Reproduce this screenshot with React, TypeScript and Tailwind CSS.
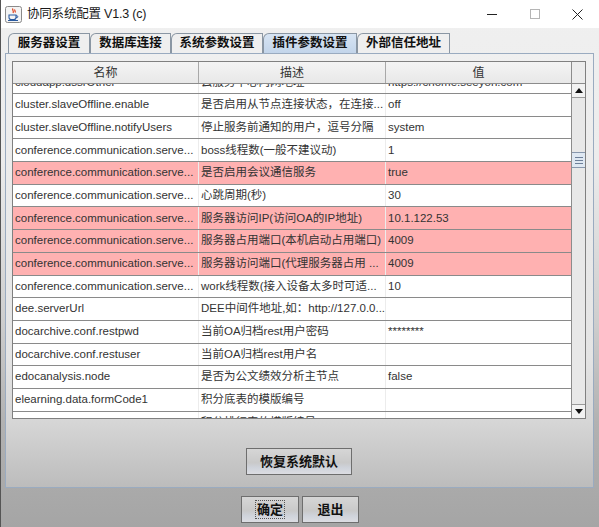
import React from "react";

type Row = { k: string; d: string; v: string; p?: boolean };

const rows: Row[] = [
  { k: "cloudapp.dssrOther", d: "云服务中心内网地址", v: "https://chome.seeyon.com" },
  { k: "cluster.slaveOffline.enable", d: "是否启用从节点连接状态，在连接...", v: "off" },
  { k: "cluster.slaveOffline.notifyUsers", d: "停止服务前通知的用户，逗号分隔", v: "system" },
  { k: "conference.communication.serve...", d: "boss线程数(一般不建议动)", v: "1" },
  { k: "conference.communication.serve...", d: "是否启用会议通信服务", v: "true", p: true },
  { k: "conference.communication.serve...", d: "心跳周期(秒)", v: "30" },
  { k: "conference.communication.serve...", d: "服务器访问IP(访问OA的IP地址)", v: "10.1.122.53", p: true },
  { k: "conference.communication.serve...", d: "服务器占用端口(本机启动占用端口)", v: "4009", p: true },
  { k: "conference.communication.serve...", d: "服务器访问端口(代理服务器占用 ...", v: "4009", p: true },
  { k: "conference.communication.serve...", d: "work线程数(接入设备太多时可适...", v: "10" },
  { k: "dee.serverUrl", d: "DEE中间件地址,如：http://127.0.0....", v: "" },
  { k: "docarchive.conf.restpwd", d: "当前OA归档rest用户密码", v: "********" },
  { k: "docarchive.conf.restuser", d: "当前OA归档rest用户名", v: "" },
  { k: "edocanalysis.node", d: "是否为公文绩效分析主节点", v: "false" },
  { k: "elearning.data.formCode1", d: "积分底表的模版编号", v: "" },
  { k: "elearning.data.formCode2", d: "积分排行表的模版编号", v: "" },
];

const tabs = [
  { t: "服务器设置", w: "w-[82px]" },
  { t: "数据库连接", w: "w-[81px]" },
  { t: "系统参数设置", w: "w-[92px]" },
  { t: "插件参数设置", w: "w-[94px]", sel: true },
  { t: "外部信任地址", w: "w-[93px]" },
];

function JavaIcon() {
  return (
    <svg width="17" height="17" viewBox="0 0 17 17">
      <rect x="0.5" y="0.5" width="16" height="16" rx="2" fill="#f4f4f4" stroke="#8a8a8a" />
      <path d="M8 2.5c-1.5 1.5 1.5 2.5 0 4.5M10 3.5c-1 1 1 1.8 0 3" stroke="#e0401a" strokeWidth="1.2" fill="none" />
      <path d="M4 9h7v2.5c0 1.2-1 2-2.2 2H6.2C5 13.5 4 12.7 4 11.5z" fill="none" stroke="#2a5aa0" strokeWidth="1.1" />
      <path d="M11 9.8h1.2c.8 0 .8 1.8 0 1.8H11" fill="none" stroke="#2a5aa0" strokeWidth="1" />
      <path d="M3 14.5h10" stroke="#2a5aa0" strokeWidth="1" />
    </svg>
  );
}

function Btn({ children, w, focus }: { children: React.ReactNode; w: string; focus?: boolean }) {
  return (
    <div
      className={`${w} h-[27px] border border-[#6e6e6e] bg-[linear-gradient(to_bottom,#d6d6d6_0%,#c9c9c9_55%,#cfd3db_75%,#dcdde2_100%)] flex items-center justify-center text-[13px] font-bold text-[#111]`}
    >
      <span className={focus ? "border border-dotted border-[#555] px-[1px] leading-[17px]" : "leading-[17px]"}>{children}</span>
    </div>
  );
}

export default function App() {
  return (
    <div className="w-[599px] h-[527px] flex flex-col overflow-hidden border-l border-[#555] bg-[linear-gradient(to_bottom,#f0f0f0_0%,#ececec_30%,#cfcfcf_60%,#b2b2b2_80%,#a5a5a5_100%)] font-['Liberation_Sans','Noto_Sans_CJK_SC',sans-serif] text-[#222]">
      {/* title bar */}
      <div className="h-[28px] bg-white flex items-center shrink-0">
        <div className="ml-[4px] mt-[1px]">
          <JavaIcon />
        </div>
        <div className="ml-[5px] text-[12.5px] text-[#1a1a1a] tracking-[-0.2px]">协同系统配置 V1.3 (c)</div>
        <div className="ml-auto flex h-full">
          <div className="w-[43px] flex items-center justify-center">
            <div className="w-[10px] h-[1px] bg-[#222]" />
          </div>
          <div className="w-[43px] flex items-center justify-center">
            <div className="w-[10px] h-[10px] border border-[#b5b5b5]" />
          </div>
          <div className="w-[43px] flex items-center justify-center">
            <svg width="11" height="11" viewBox="0 0 11 11">
              <path d="M0.5 0.5L10.5 10.5M10.5 0.5L0.5 10.5" stroke="#222" strokeWidth="1" />
            </svg>
          </div>
        </div>
      </div>

      {/* tabs */}
      <div className="mt-[5px] h-[20px] pl-[7px] flex shrink-0">
        {tabs.map((t) => (
          <div
            key={t.t}
            className={`${t.w} h-[20px] border-l border-t border-r border-[#8a96a3] rounded-tl-[6px] flex items-center justify-center text-[12.5px] font-bold text-[#111] ${
              t.sel ? "bg-[linear-gradient(to_bottom,#d7e4f3,#c3d5ea)]" : "bg-[#efefef]"
            }`}
          >
            {t.t}
          </div>
        ))}
      </div>

      {/* panel */}
      <div className="ml-[4px] w-[589px] h-[435px] border border-[#9aabc0] shrink-0 flex flex-col items-start pt-[7px] pl-[6px] bg-[linear-gradient(to_bottom,#f0f0f0_0%,#e4e4e4_70%,#d6d6d6_85%,#bcbcbc_100%)]">
        {/* table */}
        <div className="w-[574px] h-[358px] border border-[#808080] flex bg-white">
          <div className="w-[558px] flex flex-col">
            <div className="h-[22px] shrink-0 grid grid-cols-[186px_187px_185px] border-b border-[#8c8c8c] bg-[linear-gradient(to_bottom,#f4f4f4,#e8e8e8)] text-[12px] text-[#333]">
              <div className="border-r border-[#a8a8a8] flex items-center justify-center">名称</div>
              <div className="border-r border-[#a8a8a8] flex items-center justify-center">描述</div>
              <div className="flex items-center justify-center">值</div>
            </div>
            <div className="flex-1 overflow-hidden">
              {rows.map((r, i) => (
                <div
                  key={i}
                  className={`h-[22.7px] grid grid-cols-[186px_187px_185px] border-b border-[#8a8a8a] text-[#333] ${
                    r.p ? "bg-[#ffb1b1]" : "bg-white"
                  } ${i === 0 ? "mt-[-12.7px]" : ""}`}
                >
                  <div className="border-r border-[#ececec] pl-[2px] flex items-center overflow-hidden whitespace-nowrap text-[11.5px]">
                    {r.k}
                  </div>
                  <div className="border-r border-[#ececec] pl-[2px] flex items-center overflow-hidden whitespace-nowrap text-[11.5px]">
                    {r.d}
                  </div>
                  <div className="pl-[2px] flex items-center overflow-hidden whitespace-nowrap text-[11.5px]">{r.v}</div>
                </div>
              ))}
            </div>
          </div>
          {/* scrollbar */}
          <div className="w-[14px] flex flex-col border-l border-[#8c8c8c]">
            <div className="h-[22px] shrink-0 border-b border-[#8c8c8c] bg-[#ececec]" />
            <div className="h-[14px] shrink-0 border-b border-[#9a9a9a] bg-[#f2f2f2] flex items-center justify-center">
              <svg width="8" height="5" viewBox="0 0 8 5">
                <path d="M0 5L4 0L8 5Z" fill="#111" />
              </svg>
            </div>
            <div className="flex-1 bg-[#e8e8e8] flex flex-col">
              <div className="mt-[54px] h-[16px] border-y border-[#8797ad] bg-[#dfe8f2] flex flex-col items-center justify-center gap-[2px]">
                <div className="w-[8px] h-[1px] bg-[#6d7f99]" />
                <div className="w-[8px] h-[1px] bg-[#6d7f99]" />
                <div className="w-[8px] h-[1px] bg-[#6d7f99]" />
              </div>
            </div>
            <div className="h-[14px] shrink-0 border-t border-[#9a9a9a] bg-[#f2f2f2] flex items-center justify-center">
              <svg width="8" height="5" viewBox="0 0 8 5">
                <path d="M0 0L8 0L4 5Z" fill="#111" />
              </svg>
            </div>
          </div>
        </div>

        <div className="w-[574px] flex justify-center mt-[29px]">
          <Btn w="w-[106px]">恢复系统默认</Btn>
        </div>
      </div>

      {/* bottom buttons */}
      <div className="mt-[8px] flex justify-center gap-[3px] shrink-0">
        <Btn w="w-[58px]" focus>
          确定
        </Btn>
        <Btn w="w-[57px]">退出</Btn>
      </div>
    </div>
  );
}
